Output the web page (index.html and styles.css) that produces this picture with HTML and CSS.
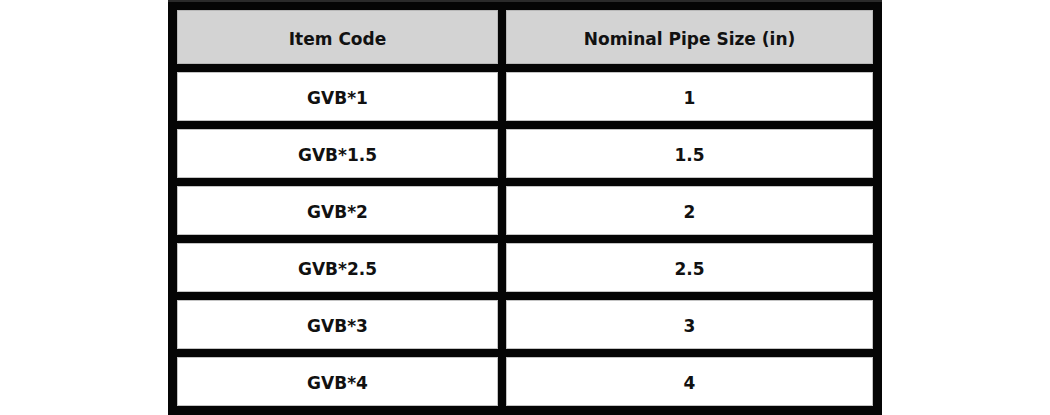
FILE: index.html
```html
<!DOCTYPE html>
<html>
<head>
<meta charset="utf-8">
<link rel="stylesheet" href="styles.css">
</head>
<body>
<div class="spec-table">
  <div class="cell head">Item Code</div>
  <div class="cell head">Nominal Pipe Size (in)</div>
  <div class="cell">GVB*1</div>
  <div class="cell">1</div>
  <div class="cell">GVB*1.5</div>
  <div class="cell">1.5</div>
  <div class="cell">GVB*2</div>
  <div class="cell">2</div>
  <div class="cell">GVB*2.5</div>
  <div class="cell">2.5</div>
  <div class="cell">GVB*3</div>
  <div class="cell">3</div>
  <div class="cell">GVB*4</div>
  <div class="cell">4</div>
</div>
</body>
</html>
```
FILE: styles.css
```css
html, body {
  margin: 0;
  padding: 0;
  background: #ffffff;
}
.spec-table {
  width: 714px;
  box-sizing: border-box;
  margin: 0 auto;
  background: #050505;
  border-top: 2px solid #2a2a2a;
  padding: 8px 9px 9px 9px;
  display: grid;
  grid-template-columns: 321px 367px;
  grid-template-rows: 54px repeat(6, 49px);
  gap: 8px;
}
.cell {
  background: #ffffff;
  box-shadow: inset 0 0 0 1px #c4c4c4;
  display: flex;
  align-items: center;
  justify-content: center;
  padding-top: 3px;
  box-sizing: border-box;
  font-family: "DejaVu Sans", Verdana, sans-serif;
  font-weight: bold;
  font-size: 17px;
  color: #111111;
}
.cell.head {
  background: #d3d3d3;
  box-shadow: inset 0 0 0 1px #b8b8b8;
}
```
